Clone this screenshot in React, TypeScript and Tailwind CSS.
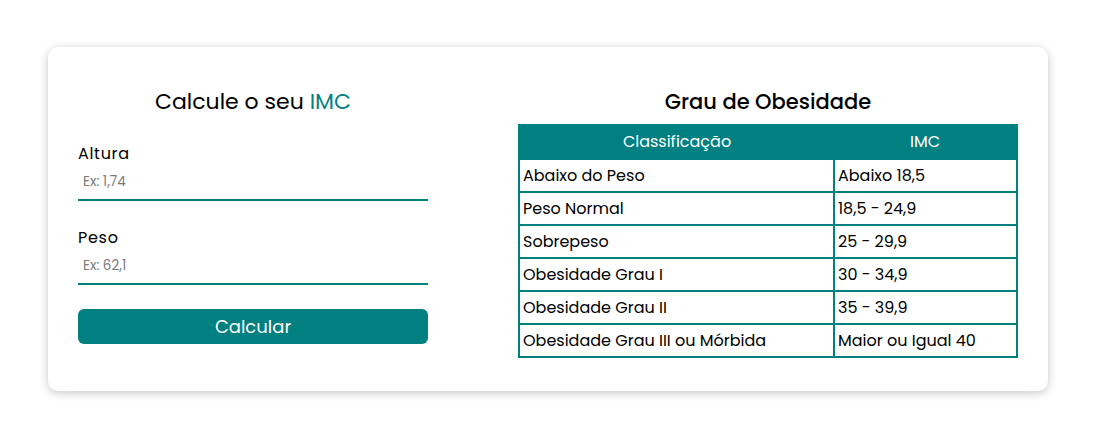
const faixas = [
  ['Abaixo do Peso', 'Abaixo 18,5'],
  ['Peso Normal', '18,5 - 24,9'],
  ['Sobrepeso', '25 - 29,9'],
  ['Obesidade Grau I', '30 - 34,9'],
  ['Obesidade Grau II', '35 - 39,9'],
  ['Obesidade Grau III ou Mórbida', 'Maior ou Igual 40'],
];

export default function App() {
  return (
    <div className="min-h-[442px] bg-white pt-[47px] font-['Poppins','Open_Sans',sans-serif] text-black">
      <div className="ml-[48px] flex w-[1000px] gap-[90px] rounded-[10px] bg-white px-[30px] pt-[41px] pb-[33px] shadow-[0_2px_10px_rgba(0,0,0,0.22)]">
        {/* formulario */}
        <div className="flex w-[350px] flex-col">
          <h1 className="text-center text-[22px] leading-[28px]">
            Calcule o seu <span className="text-[#008080]">IMC</span>
          </h1>

          <label className="mt-[27px] text-[16px] leading-[22px] tracking-[0.7px]">Altura</label>
          <input
            type="text"
            placeholder="Ex: 1,74"
            className="h-[36px] border-b-2 border-[#008080] pl-[5px] text-[13.5px] outline-none placeholder:text-[#7a7a7a]"
          />

          <label className="mt-[26px] text-[16px] leading-[22px] tracking-[0.7px]">Peso</label>
          <input
            type="text"
            placeholder="Ex: 62,1"
            className="h-[36px] border-b-2 border-[#008080] pl-[5px] text-[13.5px] outline-none placeholder:text-[#7a7a7a]"
          />

          <button className="mt-[24px] h-[35px] rounded-[6px] bg-[#008080] text-[18px] text-white">Calcular</button>
        </div>

        {/* tabela */}
        <div className="flex w-[500px] flex-col">
          <h2 className="text-center text-[21px] leading-[28px] font-medium">Grau de Obesidade</h2>
          <table className="mt-[8px] w-full border-collapse border-2 border-[#008080] text-[16px]">
            <thead>
              <tr className="bg-[#008080] text-white">
                <th className="h-[34px] w-[315px] font-normal">Classificação</th>
                <th className="h-[34px] font-normal">IMC</th>
              </tr>
            </thead>
            <tbody>
              {faixas.map(([nome, valor]) => (
                <tr key={nome}>
                  <td className="h-[33px] border-2 border-[#008080] px-[3px] leading-[24px]">{nome}</td>
                  <td className="h-[33px] border-2 border-[#008080] px-[3px] leading-[24px]">{valor}</td>
                </tr>
              ))}
            </tbody>
          </table>
        </div>
      </div>
    </div>
  );
}
